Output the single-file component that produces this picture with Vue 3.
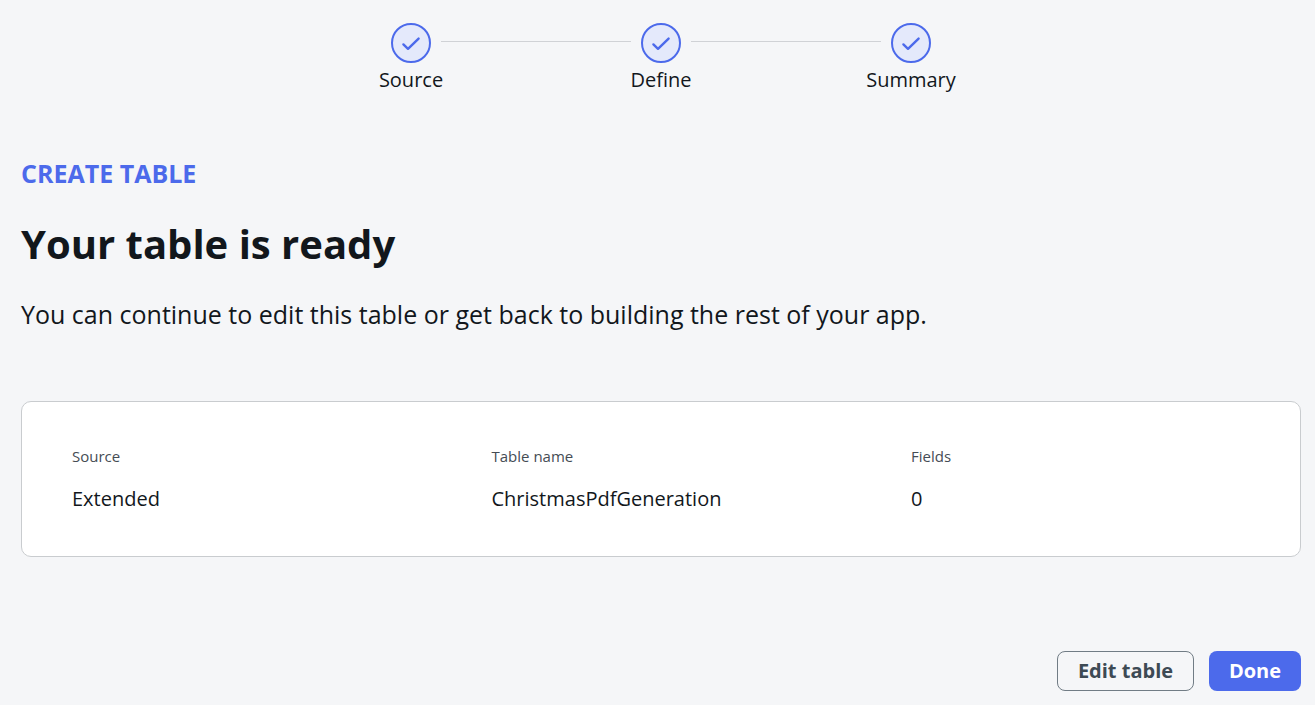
<script setup>
const steps = ['Source', 'Define', 'Summary']
const rows = [
  { label: 'Source', value: 'Extended' },
  { label: 'Table name', value: 'ChristmasPdfGeneration' },
  { label: 'Fields', value: '0' },
]
</script>

<template>
  <div class="page">
    <div class="stepper">
      <template v-for="(s, i) in steps" :key="s">
        <div class="step">
          <div class="circle">
            <svg width="20" height="20" viewBox="0 0 20 20" fill="none">
              <path d="M2.4 11.4 L7 15.8 L17.6 5.6" stroke="#4c6aeb" stroke-width="2.4" stroke-linecap="round" stroke-linejoin="round"/>
            </svg>
          </div>
          <div class="step-label">{{ s }}</div>
        </div>
        <div v-if="i < steps.length - 1" class="line"></div>
      </template>
    </div>

    <div class="eyebrow">CREATE TABLE</div>
    <h1 class="title">Your table is ready</h1>
    <p class="desc">You can continue to edit this table or get back to building the rest of your app.</p>

    <div class="card">
      <div v-for="r in rows" :key="r.label" class="col">
        <div class="col-label">{{ r.label }}</div>
        <div class="col-value">{{ r.value }}</div>
      </div>
    </div>

    <div class="actions">
      <button class="btn secondary">Edit table</button>
      <button class="btn primary">Done</button>
    </div>
  </div>
</template>

<style>
html, body { margin: 0; background: #f5f6f8; }
</style>

<style scoped>
.page {
  height: 705px;
  box-sizing: border-box;
  padding: 22px 14px 14px 21px;
  background: #f5f6f8;
  font-family: "Open Sans", sans-serif;
  color: #12171c;
  display: flex;
  flex-direction: column;
  overflow: hidden;
}
.stepper {
  display: flex;
  justify-content: center;
  align-items: flex-start;
  height: 70px;
  padding-top: 1px;
  margin-bottom: -1px;
}
.step {
  width: 60px;
  display: flex;
  flex-direction: column;
  align-items: center;
}
.circle {
  width: 40px;
  height: 40px;
  box-sizing: border-box;
  border: 2px solid #4c6aeb;
  border-radius: 50%;
  background: #e4e9fb;
  display: flex;
  align-items: center;
  justify-content: center;
}
.step-label {
  font-size: 20px;
  line-height: 24px;
  margin-top: 5px;
  white-space: nowrap;
}
.line {
  width: 190px;
  height: 1px;
  margin-top: 18px;
  background: #d0d2d6;
}
.eyebrow {
  margin-top: 65px;
  font-size: 25px;
  line-height: 32px;
  font-weight: 700;
  color: #4c6aeb;
}
.title {
  margin: 29px 0 0;
  font-size: 40px;
  line-height: 52px;
  font-weight: 700;
  color: #12171c;
}
.desc {
  margin: 28px 0 0;
  font-size: 25px;
  line-height: 32px;
}
.card {
  margin-top: 71px;
  height: 156px;
  box-sizing: border-box;
  background: #fff;
  border: 1px solid #c9cccf;
  border-radius: 10px;
  padding: 44px 50px;
  display: grid;
  grid-template-columns: 419.5px 419.5px 1fr;
}
.col-label {
  font-size: 15px;
  line-height: 20px;
  color: #454c54;
}
.col-value {
  margin-top: 21px;
  font-size: 20px;
  line-height: 24px;
}
.actions {
  margin-top: auto;
  display: flex;
  justify-content: flex-end;
  gap: 15px;
}
.btn {
  height: 40px;
  border-radius: 8px;
  font-family: inherit;
  font-size: 20px;
  font-weight: 700;
  box-sizing: border-box;
  padding: 0 0 2px;
}
.secondary {
  width: 137px;
  background: transparent;
  border: 1px solid #717c85;
  color: #3d4a54;
}
.primary {
  width: 92px;
  background: #4c6aeb;
  border: 0;
  color: #fff;
}
</style>
